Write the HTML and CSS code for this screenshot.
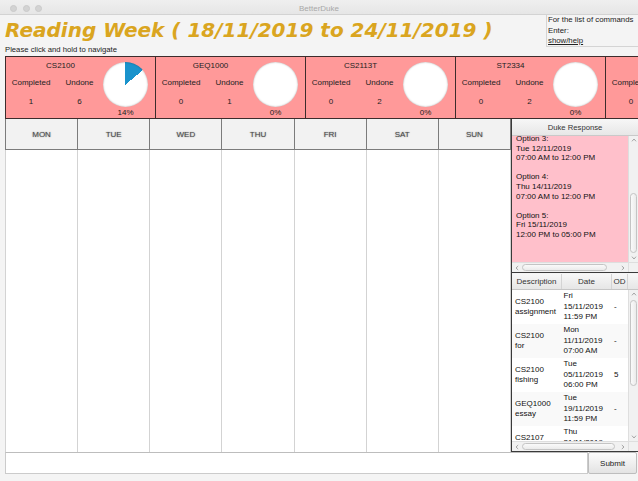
FILE: index.html
```html
<!DOCTYPE html>
<html lang="en">
<head>
<meta charset="utf-8">
<title>BetterDuke</title>
<link rel="stylesheet" href="styles.css">
</head>
<body>
<div class="titlebar">
  <div class="lights"><span class="light"></span><span class="light"></span><span class="light"></span></div>
  <div class="title">BetterDuke</div>
  <div></div>
</div>
<div class="app">
  <header class="top">
    <div class="heading">
      <h1 class="week-title">Reading Week ( 18/11/2019 to 24/11/2019 )</h1>
      <p class="hint">Please click and hold to navigate</p>
    </div>
    <div class="help">For the list of commands<br>Enter:<br><span class="cmdlink">show/help</span></div>
  </header>

  <div class="modules">
    <div class="card">
      <div class="stats">
        <div class="code">CS2100</div>
        <div class="lbl">Completed</div><div class="lbl">Undone</div>
        <div class="num">1</div><div class="num">6</div>
      </div>
      <div class="chart"><div class="pie" style="--p:14%"></div><div class="pct">14%</div></div>
    </div>
    <div class="card">
      <div class="stats">
        <div class="code">GEQ1000</div>
        <div class="lbl">Completed</div><div class="lbl">Undone</div>
        <div class="num">0</div><div class="num">1</div>
      </div>
      <div class="chart"><div class="pie" style="--p:0%"></div><div class="pct">0%</div></div>
    </div>
    <div class="card">
      <div class="stats">
        <div class="code">CS2113T</div>
        <div class="lbl">Completed</div><div class="lbl">Undone</div>
        <div class="num">0</div><div class="num">2</div>
      </div>
      <div class="chart"><div class="pie" style="--p:0%"></div><div class="pct">0%</div></div>
    </div>
    <div class="card">
      <div class="stats">
        <div class="code">ST2334</div>
        <div class="lbl">Completed</div><div class="lbl">Undone</div>
        <div class="num">0</div><div class="num">2</div>
      </div>
      <div class="chart"><div class="pie" style="--p:0%"></div><div class="pct">0%</div></div>
    </div>
    <div class="card">
      <div class="stats">
        <div class="code">CS2107</div>
        <div class="lbl">Completed</div><div class="lbl">Undone</div>
        <div class="num">0</div><div class="num">1</div>
      </div>
      <div class="chart"><div class="pie" style="--p:0%"></div><div class="pct">0%</div></div>
    </div>
  </div>

  <div class="main">
    <section class="week">
      <div class="days-head">
        <div class="day">MON</div><div class="day">TUE</div><div class="day">WED</div><div class="day">THU</div><div class="day">FRI</div><div class="day">SAT</div><div class="day">SUN</div>
      </div>
      <div class="days-body">
        <div class="col"></div><div class="col"></div><div class="col"></div><div class="col"></div><div class="col"></div><div class="col"></div><div class="col"></div>
      </div>
    </section>

    <aside class="side">
      <div class="resp">
        <div class="resp-head">Duke Response</div>
        <div class="resp-main">
          <div class="resp-view">
            <div class="resp-text">
              <p class="opt">Option 3:<br>Tue 12/11/2019<br>07:00 AM to 12:00 PM</p>
              <p class="opt">Option 4:<br>Thu 14/11/2019<br>07:00 AM to 12:00 PM</p>
              <p class="opt">Option 5:<br>Fri 15/11/2019<br>12:00 PM to 05:00 PM</p>
            </div>
          </div>
          <div class="vbar">
            <div class="arrow"><svg viewBox="0 0 6 4"><path d="M1 3.3 L3 1 L5 3.3"/></svg></div>
            <div class="track"><div class="thumb"></div></div>
            <div class="arrow"><svg viewBox="0 0 6 4"><path d="M1 0.7 L3 3 L5 0.7"/></svg></div>
          </div>
        </div>
        <div class="hbar">
          <div class="harrow"><svg viewBox="0 0 4 6"><path d="M3.2 1 L1 3 L3.2 5"/></svg></div>
          <div class="htrack"><div class="hthumb"></div></div>
          <div class="harrow"><svg viewBox="0 0 4 6"><path d="M0.8 1 L3 3 L0.8 5"/></svg></div>
          <div class="corner"></div>
        </div>
      </div>

      <div class="tasks">
        <div class="thead">
          <div class="th c-desc">Description</div>
          <div class="th c-date">Date</div>
          <div class="th c-od">OD</div>
          <div class="th-blank"></div>
        </div>
        <div class="tmain">
          <div class="tview">
            <div class="row">
              <div class="td c-desc">CS2100<br>assignment</div>
              <div class="td c-date">Fri<br>15/11/2019<br>11:59 PM</div>
              <div class="td c-od">-</div>
            </div>
            <div class="row">
              <div class="td c-desc">CS2100<br>for</div>
              <div class="td c-date">Mon<br>11/11/2019<br>07:00 AM</div>
              <div class="td c-od">-</div>
            </div>
            <div class="row">
              <div class="td c-desc">CS2100<br>fishing</div>
              <div class="td c-date">Tue<br>05/11/2019<br>06:00 PM</div>
              <div class="td c-od">5</div>
            </div>
            <div class="row">
              <div class="td c-desc">GEQ1000<br>essay</div>
              <div class="td c-date">Tue<br>19/11/2019<br>11:59 PM</div>
              <div class="td c-od">-</div>
            </div>
            <div class="row">
              <div class="td c-desc">CS2107<br>assignment</div>
              <div class="td c-date">Thu<br>21/11/2019<br>11:59 PM</div>
              <div class="td c-od">-</div>
            </div>
          </div>
          <div class="vbar">
            <div class="arrow"><svg viewBox="0 0 6 4"><path d="M1 3.3 L3 1 L5 3.3"/></svg></div>
            <div class="track"><div class="thumb"></div></div>
            <div class="arrow"><svg viewBox="0 0 6 4"><path d="M1 0.7 L3 3 L5 0.7"/></svg></div>
          </div>
        </div>
        <div class="hbar">
          <div class="harrow"><svg viewBox="0 0 4 6"><path d="M3.2 1 L1 3 L3.2 5"/></svg></div>
          <div class="htrack"><div class="hthumb"></div></div>
          <div class="harrow"><svg viewBox="0 0 4 6"><path d="M0.8 1 L3 3 L0.8 5"/></svg></div>
          <div class="corner"></div>
        </div>
      </div>
    </aside>
  </div>

  <div class="inputbar">
    <input class="cmd" type="text" aria-label="Command">
    <button class="submit" type="button">Submit</button>
  </div>
</div>
</body>
</html>
```

FILE: styles.css
```css
* { box-sizing: border-box; margin: 0; padding: 0; }

html, body { width: 638px; height: 481px; overflow: hidden; }

body {
  font-family: "Liberation Sans", Arial, sans-serif;
  font-size: 8px;
  color: #222;
  background: #f4f4f4;
}

/* window title bar */
.titlebar {
  height: 15px;
  display: grid;
  grid-template-columns: 1fr auto 1fr;
  align-items: center;
  padding-top: 2px;
  background: linear-gradient(#efefef, #e6e6e6);
  border-bottom: 1px solid #d3d3d3;
}
.lights { display: flex; gap: 5.5px; padding-left: 10px; }
.light {
  width: 7px; height: 7px; border-radius: 50%;
  background: #d3d3d3; border: 1px solid #cacaca;
}
.title { color: #a8a8a8; font-size: 8px; }

.app { padding-left: 5px; }

/* heading */
.top { display: flex; height: 41px; }
.heading { flex: 1; padding-top: 3px; }
.week-title {
  font: italic bold 20px/24px "DejaVu Sans", Verdana, sans-serif;
  color: #daa520;
  white-space: nowrap;
}
.hint { font-size: 7.7px; line-height: 10px; margin-top: 3px; color: #222; }
.help {
  width: 92px; height: 32px;
  border-left: 1px solid #d4d4d4;
  border-bottom: 1px solid #d4d4d4;
  padding-left: 1px;
  font-size: 7.8px; line-height: 10.5px;
  white-space: nowrap; overflow: hidden;
}
.cmdlink { text-decoration: underline; }

/* module cards */
.modules {
  display: flex;
  height: 63px;
  overflow: hidden;
  border-top: 1px solid #3c2c2c;
  border-bottom: 1px solid #3c2c2c;
  border-left: 1px solid #3c2c2c;
}
.card {
  flex: 0 0 150px;
  display: flex;
  background: #ff9999;
  border-right: 1px solid #3c2c2c;
}
.stats {
  width: 97px;
  display: grid;
  grid-template-columns: 50px 47px;
  align-content: start;
  padding-top: 4px;
  text-align: center;
  line-height: 10px;
  white-space: nowrap;
}
.code { grid-column: 1 / -1; padding-left: 12px; }
.lbl { margin-top: 7px; }
.num { margin-top: 9px; }
.chart {
  width: 45px;
  display: flex; flex-direction: column; align-items: center;
  padding-top: 5px;
}
.pie {
  width: 45px; height: 45px; border-radius: 50%;
  background: conic-gradient(#1a93cc 0 var(--p), #ffffff 0);
  box-shadow: inset 0 0 2px rgba(0, 0, 0, 0.35);
}
.pct { line-height: 10px; margin-top: 1px; }

/* main area */
.main { display: flex; height: 333px; }

.week { width: 506px; display: flex; flex-direction: column; }
.days-head {
  display: flex; height: 31px;
  background: #f2f2f2;
  border-left: 1px solid #7c7c7c;
  border-bottom: 1px solid #7c7c7c;
}
.day {
  flex: 1;
  display: flex; align-items: center; justify-content: center;
  border-right: 1px solid #7c7c7c;
  color: #4a4a4a;
  text-shadow: 0 0 1.5px rgba(0, 0, 0, 0.45);
}
.days-body { flex: 1; display: flex; border-left: 1px solid #d3d3d3; }
.col { flex: 1; background: #fff; border-right: 1px solid #d3d3d3; }

/* side panel */
.side {
  width: 127px;
  display: flex; flex-direction: column;
  border-left: 1px solid #3a3a3a;
}
.resp { border-bottom: 1px solid #3a3a3a; }
.resp-head {
  height: 17px;
  display: flex; align-items: center; justify-content: center;
  background: linear-gradient(#f7f7f7, #e7e7e7);
  border-bottom: 1px solid #c9c9c9;
  font-size: 7.7px; color: #333;
}
.resp-main { height: 126px; display: flex; }
.resp-view { flex: 1; background: #ffc0cb; overflow: hidden; }
.resp-text { margin-top: -2px; padding-left: 4px; line-height: 9.6px; color: #111; white-space: nowrap; }
.opt { margin-bottom: 9.6px; }

/* scrollbars */
.vbar {
  width: 10px;
  display: flex; flex-direction: column;
  background: #f1f1f1;
  border-left: 1px solid #dedede;
}
.arrow { height: 8px; display: flex; align-items: center; justify-content: center; }
.arrow svg { width: 6px; height: 4px; }
.vbar svg path, .hbar svg path { fill: none; stroke: #9c9c9c; stroke-width: 0.9; }
.track { flex: 1; padding: 0 1px; }
.thumb {
  border: 1px solid #c4c4c4; border-radius: 4px;
  background: linear-gradient(to right, #fafafa, #ebebeb);
}
.resp .thumb { margin-top: 49px; height: 60px; }
.tasks .thumb { margin-top: 2px; height: 86px; }

.hbar {
  height: 10px;
  display: flex;
  background: #f1f1f1;
  border-top: 1px solid #dedede;
}
.harrow { width: 10px; display: flex; align-items: center; justify-content: center; }
.harrow svg { width: 4px; height: 6px; }
.htrack { flex: 1; padding: 1px 0; }
.hthumb {
  height: 100%;
  border: 1px solid #c4c4c4; border-radius: 4px;
  background: linear-gradient(#fafafa, #ebebeb);
}
.resp .hthumb { width: 85px; }
.tasks .hthumb { width: 93px; }
.corner { width: 10px; background: #f1f1f1; border-left: 1px solid #dedede; }

/* task table */
.tasks { margin-top: 1px; border-bottom: 1px solid #3a3a3a; }
.thead {
  height: 16px;
  display: flex;
  background: linear-gradient(#f7f7f7, #e6e6e6);
  border-bottom: 1px solid #c6c6c6;
  color: #333;
}
.th {
  display: flex; align-items: center; justify-content: center;
  border-right: 1px solid #d4d4d4;
}
.c-desc { width: 50px; }
.c-date { width: 50px; }
.c-od { width: 16px; }
.th-blank { width: 10px; }

.tmain { height: 151px; display: flex; }
.tview { flex: 1; overflow: hidden; background: #fff; }
.row {
  display: flex; align-items: center;
  height: 34px;
  line-height: 10.5px;
  white-space: nowrap;
  color: #111;
}
.row:nth-child(even) { background: #f9f9f9; }
.td.c-desc { padding-left: 3px; }
.td.c-date { padding-left: 1.5px; }
.td.c-od { padding-left: 2px; }

/* command input */
.inputbar { display: flex; height: 22px; margin-right: 1px; }
.cmd {
  flex: 1; min-width: 0;
  border: 1px solid #cbcbcb;
  border-top-color: #bdbdbd;
  background: #fff;
  font: 8px "Liberation Sans", Arial, sans-serif;
  outline: none;
}
.submit {
  width: 49px;
  border: 1px solid #bdbdbd; border-radius: 2px;
  background: linear-gradient(#fcfcfc, #e3e3e3);
  font: 8px "Liberation Sans", Arial, sans-serif;
  color: #222;
}
```
